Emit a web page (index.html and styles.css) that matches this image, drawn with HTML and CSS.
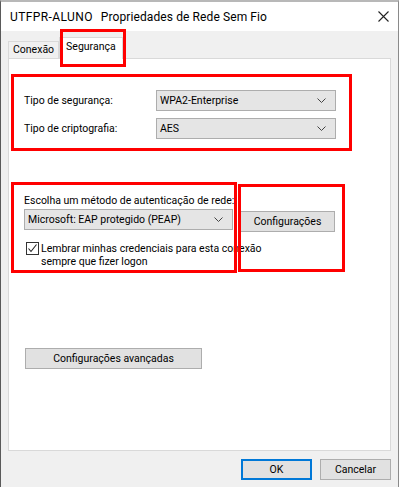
FILE: index.html
```html
<!DOCTYPE html>
<html lang="pt">
<head>
<meta charset="utf-8">
<title>Propriedades de Rede Sem Fio</title>
<link rel="stylesheet" href="styles.css">
</head>
<body>
<div class="screen">
  <div class="window">
    <div class="titlebar">
      <span class="title-name">UTFPR-ALUNO</span>
      <span class="title-text">Propriedades de Rede Sem Fio</span>
      <span class="close">
        <svg width="11" height="11" viewBox="0 0 11 11"><path d="M0.5 0.5 L10.5 10.5 M10.5 0.5 L0.5 10.5" stroke="#222" stroke-width="1.1" fill="none"/></svg>
      </span>
    </div>
    <div class="client">
      <div class="tabs">
        <div class="tab">Conexão</div>
        <div class="tab tab-active">Segurança</div>
      </div>
      <div class="panel">
        <div class="sec-group">
          <div class="row">
            <span class="label">Tipo de segurança:</span>
            <div class="select select-wide"><span>WPA2-Enterprise</span><svg class="chev" width="9" height="5" viewBox="0 0 9 5"><path d="M0.5 0.5 L4.5 4.5 L8.5 0.5" stroke="#444" fill="none"/></svg></div>
          </div>
          <div class="row">
            <span class="label">Tipo de criptografia:</span>
            <div class="select select-wide"><span>AES</span><svg class="chev" width="9" height="5" viewBox="0 0 9 5"><path d="M0.5 0.5 L4.5 4.5 L8.5 0.5" stroke="#444" fill="none"/></svg></div>
          </div>
        </div>
        <div class="auth-group">
          <div class="auth-label">Escolha um método de autenticação de rede:</div>
          <div class="auth-row">
            <div class="select select-auth"><span>Microsoft: EAP protegido (PEAP)</span><svg class="chev" width="9" height="5" viewBox="0 0 9 5"><path d="M0.5 0.5 L4.5 4.5 L8.5 0.5" stroke="#444" fill="none"/></svg></div>
            <div class="btn btn-config">Configurações</div>
          </div>
          <div class="check-row">
            <span class="checkbox"><svg width="11" height="11" viewBox="0 0 11 11"><path d="M1.5 5.5 L4 8.5 L9.5 1.5" stroke="#222" stroke-width="1.1" fill="none"/></svg></span>
            <span class="check-text"><span>Lembrar minhas credenciais para esta conexão</span><span>sempre que fizer logon</span></span>
          </div>
        </div>
        <div class="btn btn-adv">Configurações avançadas</div>
      </div>
      <div class="footer">
        <div class="btn btn-ok">OK</div>
        <div class="btn btn-cancel">Cancelar</div>
      </div>
    </div>
  </div>
  <div class="mark mark-tab"></div>
  <div class="mark mark-sec"></div>
  <div class="mark mark-auth"></div>
  <div class="mark mark-config"></div>
</div>
</body>
</html>
```
FILE: styles.css
```css
html, body {
  margin: 0;
  padding: 0;
  background: #ffffff;
}
.screen {
  position: relative;
  width: 400px;
  height: 487px;
  overflow: hidden;
  font-family: Roboto, "Noto Sans", sans-serif;
  font-size: 10.5px;
  color: #000;
}
.window {
  width: 397px;
  height: 485px;
  border-top: 2px solid #b8b8b8;
  border-left: 1px solid #5a5a5a;
  border-right: 1px solid #8a8a8a;
  display: flex;
  flex-direction: column;
  background: #f0f0f0;
}
.titlebar {
  height: 29px;
  background: #ffffff;
  display: flex;
  align-items: center;
  padding-left: 9px;
  font-size: 12px;
}
.title-name {
  margin-right: 8px;
  letter-spacing: 0.4px;
}
.title-text {
  letter-spacing: 0.1px;
}
.close {
  margin-left: auto;
  margin-right: 9px;
  display: flex;
}
.client {
  flex: 1;
  display: flex;
  flex-direction: column;
  padding: 0 7px 0 7px;
}
.tabs {
  display: flex;
  align-items: flex-end;
  height: 27px;
}
.tab {
  height: 17px;
  line-height: 16px;
  padding: 0 4px;
  border: 1px solid #d9d9d9;
  border-bottom: none;
  background: #f0f0f0;
  box-sizing: border-box;
}
.tab-active {
  height: 22px;
  line-height: 18px;
  background: #ffffff;
  padding: 0 6px;
  margin-bottom: -1px;
  position: relative;
}
.panel {
  height: 393px;
  box-sizing: border-box;
  background: #ffffff;
  border: 1px solid #d9d9d9;
  padding: 0 0 0 15px;
  display: flex;
  flex-direction: column;
}
.sec-group {
  margin-top: 31px;
  display: flex;
  flex-direction: column;
  gap: 7px;
}
.row {
  display: flex;
  align-items: center;
}
.label {
  width: 132px;
}
.select {
  height: 21px;
  box-sizing: border-box;
  background: #e5e5e5;
  border: 1px solid #adadad;
  display: flex;
  align-items: center;
  padding: 0 9px 0 3px;
}
.select span {
  flex: 1;
}
.select-wide {
  width: 180px;
}
.select-auth {
  width: 209px;
}
.auth-group {
  margin-top: 55px;
  display: flex;
  flex-direction: column;
}
.auth-label {
  height: 14px;
  line-height: 14px;
  margin-bottom: 1px;
}
.auth-row {
  display: flex;
  align-items: flex-start;
  gap: 7px;
  height: 21px;
}
.btn {
  box-sizing: border-box;
  background: #e1e1e1;
  border: 1px solid #adadad;
  display: flex;
  align-items: center;
  justify-content: center;
}
.btn-config {
  width: 95px;
  height: 21px;
  margin-top: 2px;
}
.check-row {
  margin-top: 12px;
  height: 26px;
  display: flex;
  align-items: flex-start;
  padding-left: 2px;
  line-height: 13px;
}
.checkbox {
  flex: none;
  width: 13px;
  height: 13px;
  box-sizing: border-box;
  border: 1px solid #333;
  background: #fff;
  display: flex;
  align-items: center;
  justify-content: center;
  margin-right: 2px;
}
.check-text {
  display: flex;
  flex-direction: column;
}
.btn-adv {
  width: 177px;
  height: 21px;
  margin-top: 80px;
  margin-left: 1px;
}
.footer {
  display: flex;
  justify-content: flex-end;
  gap: 8px;
  padding-top: 8px;
}
.btn-ok {
  width: 71px;
  height: 21px;
  border: 2px solid #0078d7;
}
.btn-cancel {
  width: 71px;
  height: 21px;
}
.mark {
  position: absolute;
  border: 3px solid #ff0000;
  box-sizing: border-box;
}
.mark-tab {
  left: 60px;
  top: 29px;
  width: 66px;
  height: 38px;
}
.mark-sec {
  left: 11px;
  top: 74px;
  width: 341px;
  height: 77px;
}
.mark-auth {
  left: 11px;
  top: 182px;
  width: 226px;
  height: 91px;
}
.mark-config {
  left: 238px;
  top: 184px;
  width: 107px;
  height: 88px;
}
```
